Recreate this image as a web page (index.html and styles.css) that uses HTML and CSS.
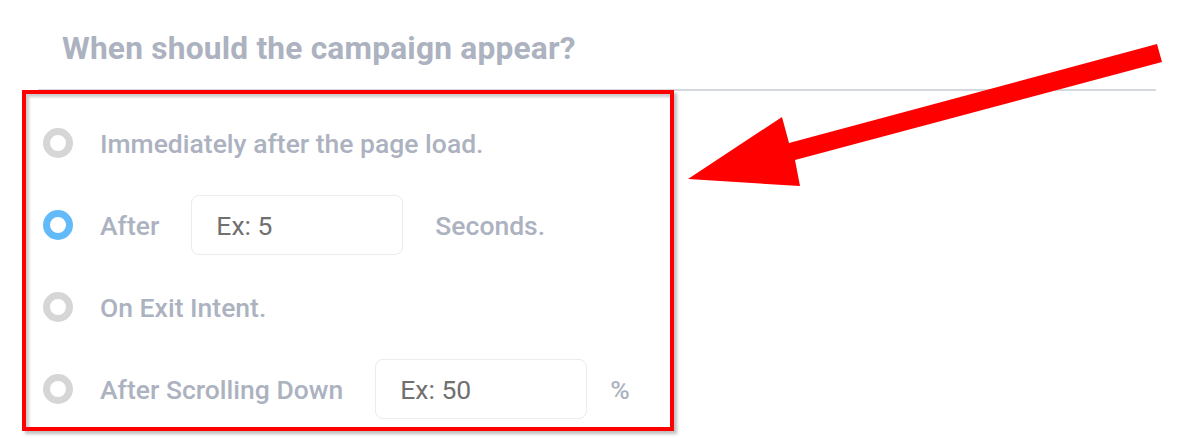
FILE: index.html
```html
<!DOCTYPE html>
<html lang="en">
<head>
<meta charset="utf-8">
<title>Campaign trigger</title>
<link rel="stylesheet" href="styles.css">
</head>
<body>
<div class="page">
  <div class="header">
    <h2 class="title">When should the campaign appear?</h2>
  </div>
  <div class="divider"></div>
  <div class="box">
    <div class="row">
      <span class="radio"></span>
      <span class="label">Immediately after the page load.</span>
    </div>
    <div class="row">
      <span class="radio radio-on"></span>
      <span class="label">After</span>
      <div class="field field-sec">Ex: 5</div>
      <span class="label">Seconds.</span>
    </div>
    <div class="row">
      <span class="radio"></span>
      <span class="label">On Exit Intent.</span>
    </div>
    <div class="row">
      <span class="radio"></span>
      <span class="label">After Scrolling Down</span>
      <div class="field field-pct">Ex: 50</div>
      <span class="label pct">%</span>
    </div>
  </div>
  <svg class="arrow" width="1201" height="439" viewBox="0 0 1201 439" aria-hidden="true">
    <polygon points="688,179 782,117 789,143 1157,44 1162,62 795,160 800,186" fill="#ff0000"/>
  </svg>
</div>
</body>
</html>
```
FILE: styles.css
```css
html, body {
  margin: 0;
  padding: 0;
  background: #ffffff;
}
.page {
  position: relative;
  width: 1201px;
  height: 439px;
  overflow: hidden;
  font-family: Roboto, "Liberation Sans", sans-serif;
}
.header {
  height: 89px;
  display: flex;
  align-items: center;
  padding-left: 62px;
  box-sizing: border-box;
  padding-top: 7px;
}
.title {
  margin: 0;
  font-size: 31.7px;
  font-weight: 700;
  color: #acb2c0;
  letter-spacing: 0.2px;
}
.divider {
  margin-left: 38px;
  width: 1118px;
  height: 2px;
  background: #d5d8df;
}
.box {
  margin-left: 22px;
  width: 652px;
  height: 341px;
  box-sizing: border-box;
  margin-top: -1px;
  border: 4px solid #ff0000;
  box-shadow: 3px 3px 3px rgba(0, 0, 0, 0.25), inset 3px 3px 3px rgba(0, 0, 0, 0.2);
  padding: 19px 0 8px 17px;
  display: flex;
  flex-direction: column;
  gap: 22px;
}
.row {
  height: 60px;
  display: flex;
  align-items: center;
  gap: 32px;
}
.radio {
  width: 16px;
  height: 16px;
  border: 7.5px solid #d6d6d6;
  border-radius: 50%;
  flex: none;
  margin-right: -5px;
}
.radio-on {
  border-color: #63baf8;
}
.label {
  font-size: 26.5px;
  font-weight: 500;
  color: #acb2c0;
}
.field {
  height: 60px;
  box-sizing: border-box;
  border: 1px solid #ebebf0;
  border-radius: 8px;
  padding-left: 24px;
  display: flex;
  align-items: center;
  font-size: 26.5px;
  color: #707070;
  width: 212px;
  flex: none;
}
.pct {
  margin-left: -9px;
}
.arrow {
  position: absolute;
  left: 0;
  top: 0;
  pointer-events: none;
}
```
